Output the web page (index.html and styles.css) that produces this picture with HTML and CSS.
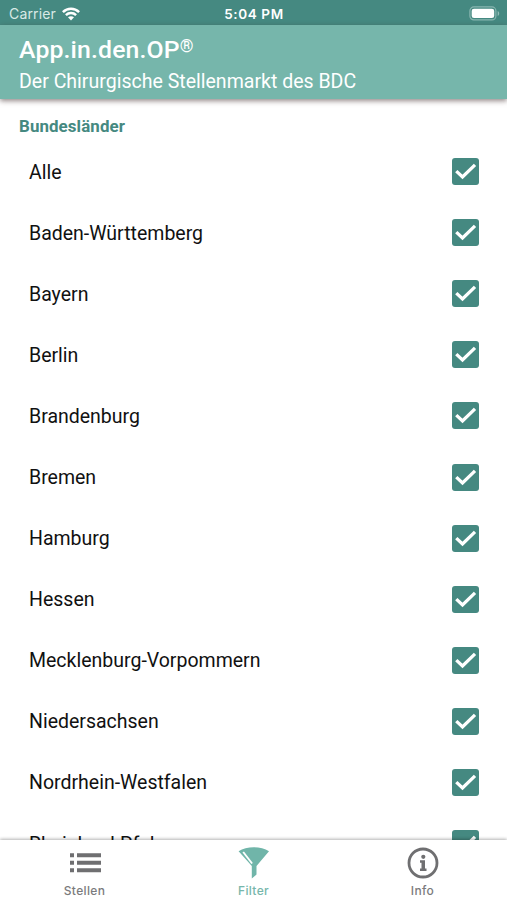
FILE: index.html
```html
<!DOCTYPE html>
<html lang="de">
<head>
<meta charset="utf-8">
<title>App.in.den.OP</title>
<link rel="stylesheet" href="styles.css">
</head>
<body>
<svg class="defs" aria-hidden="true"><symbol id="check" viewBox="0 0 27 27"><path d="M4.300 13.100l6.200 5.900L23 6.900" fill="none" stroke="#fff" stroke-width="3.300"/></symbol></svg>
<div class="app">
  <div class="status">
    <div class="carrier"><span>Carrier</span>
      <svg width="18" height="14" viewBox="0 0 18 14" fill="none" stroke="#fff" stroke-width="2.5"><path d="M.9 5.1c4.6-4.5 11.600-4.500 16.200 0M3.900 8.200c2.900-2.800 7.300-2.800 10.200 0"/><path d="M6 10.300c1.700-1.500 4.300-1.500 6 0l-3 3.200z" fill="#fff" stroke="none"/></svg>
    </div>
    <div class="time">5:04 PM</div>
    <div class="battery">
      <svg width="31" height="15" viewBox="0 0 31 15"><rect x=".9" y=".9" width="26" height="13" rx="4" fill="none" stroke="#a5c9c4" stroke-opacity=".7" stroke-width="1.200"/><rect x="2.700" y="2.700" width="22.500" height="9.300" rx="2.300" fill="#fff"/><path d="M28.700 5c2 .7 2 4.300 0 5z" fill="#a5c9c4" fill-opacity=".8"/></svg>
    </div>
  </div>
  <header class="header">
    <h1>App.in.den.OP<span class="reg">®</span></h1>
    <p>Der Chirurgische Stellenmarkt des BDC</p>
  </header>
  <main class="content">
    <h2>Bundesländer</h2>
    <ul class="states">
      <li><span>Alle</span><svg class="box"><use href="#check"/></svg></li>
      <li><span>Baden-Württemberg</span><svg class="box"><use href="#check"/></svg></li>
      <li><span>Bayern</span><svg class="box"><use href="#check"/></svg></li>
      <li><span>Berlin</span><svg class="box"><use href="#check"/></svg></li>
      <li><span>Brandenburg</span><svg class="box"><use href="#check"/></svg></li>
      <li><span>Bremen</span><svg class="box"><use href="#check"/></svg></li>
      <li><span>Hamburg</span><svg class="box"><use href="#check"/></svg></li>
      <li><span>Hessen</span><svg class="box"><use href="#check"/></svg></li>
      <li><span>Mecklenburg-Vorpommern</span><svg class="box"><use href="#check"/></svg></li>
      <li><span>Niedersachsen</span><svg class="box"><use href="#check"/></svg></li>
      <li><span>Nordrhein-Westfalen</span><svg class="box"><use href="#check"/></svg></li>
      <li><span>Rheinland-Pfalz</span><svg class="box"><use href="#check"/></svg></li>
    </ul>
  </main>
  <nav class="tabs">
    <a class="tab">
      <svg width="32" height="34" viewBox="0 0 32 34" fill="#6f6f71"><path d="M1 7.200h4v4H1zM8 7.200h24v4H8zM1 14.700h4v4H1zM8 14.700h24v4H8zM1 22.200h4v4H1zM8 22.200h24v4H8z"/></svg>
      <span>Stellen</span>
    </a>
    <a class="tab active">
      <svg width="32" height="34" viewBox="0 0 32 34"><path d="M.6 5.300C8.500-.1 23 -.1 31 5.300L18.500 20v8.500L13.800 32.500V20z" fill="#70b5a9"/><path d="M5.200 6l8.900 11.500" stroke="#fff" stroke-width="1.900"/></svg>
      <span>Filter</span>
    </a>
    <a class="tab">
      <svg width="32" height="34" viewBox="0 0 32 34"><circle cx="16" cy="17" r="14" fill="none" stroke="#6f6f71" stroke-width="2.800"/><path d="M13 14.300h5v8.200h1.500v2.500H13v-2.500h1.500v-5.700H13z" fill="#6f6f71"/><circle cx="16.300" cy="10.800" r="2.100" fill="#6f6f71"/></svg>
      <span>Info</span>
    </a>
  </nav>
</div>
</body>
</html>
```
FILE: styles.css
```css
* { box-sizing: border-box; }
body { margin: 0; font-family: Roboto, "Liberation Sans", sans-serif; background: #fff; color: #111; }
.defs { display: none; }
.app { height: 900px; display: flex; flex-direction: column; overflow: hidden; }
.status {
  flex: none; height: 25px; padding: 2px 7px 0 9px;
  display: grid; grid-template-columns: 1fr auto 1fr; align-items: center;
  background: #458981; color: #fff;
  font-family: Inter, sans-serif; font-size: 14px; line-height: 20px;
}
.carrier { display: flex; align-items: center; gap: 6px; color: #d9e9e6; letter-spacing: .15px; }
.time { font-size: 13.5px; font-weight: 600; letter-spacing: .6px; margin-right: 1px; }
.battery { display: flex; justify-content: flex-end; }
.header {
  flex: none; height: 74px; padding: 10px 19px 0; position: relative; z-index: 1;
  background: #76b6ab; color: #fff; box-shadow: 0 2px 5px rgba(60, 40, 40, .55);
}
h1 { margin: 0; font-size: 24.8px; line-height: 30px; font-weight: 500; letter-spacing: .15px; }
.reg { font-size: 17.5px; line-height: 1; vertical-align: 6px; }
.header p { margin: 4px 0 0; font-size: 19.55px; line-height: 26px; }
.content { flex: 1; min-height: 0; overflow: hidden; }
h2 { margin: 17px 19px 0; font-size: 16.9px; line-height: 20px; font-weight: 700; letter-spacing: .1px; color: #458981; }
.states { list-style: none; margin: 5px 0 0; padding: 0 28px 0 29px; }
.states li {
  height: 61.1px; display: flex; align-items: center; justify-content: space-between;
  font-size: 19.5px; line-height: 26px;
}
.states span { padding-top: 2px; }
.box { flex: none; width: 27px; height: 27px; border-radius: 3px; background: #458981; }
.tabs {
  flex: none; height: 60px; position: relative; z-index: 1; display: grid; grid-template-columns: repeat(3, 1fr);
  background: #fff; box-shadow: 0 -1px 3px rgba(0, 0, 0, .3);
}
.tab { display: flex; flex-direction: column; align-items: center; gap: 1px; padding-top: 6px; color: #7b7b7d; font-family: Inter, sans-serif; font-size: 12px; line-height: 20px; font-weight: 500; letter-spacing: .35px; }
.tab svg { flex: none; }
.active { color: #76b6ab; }
```
